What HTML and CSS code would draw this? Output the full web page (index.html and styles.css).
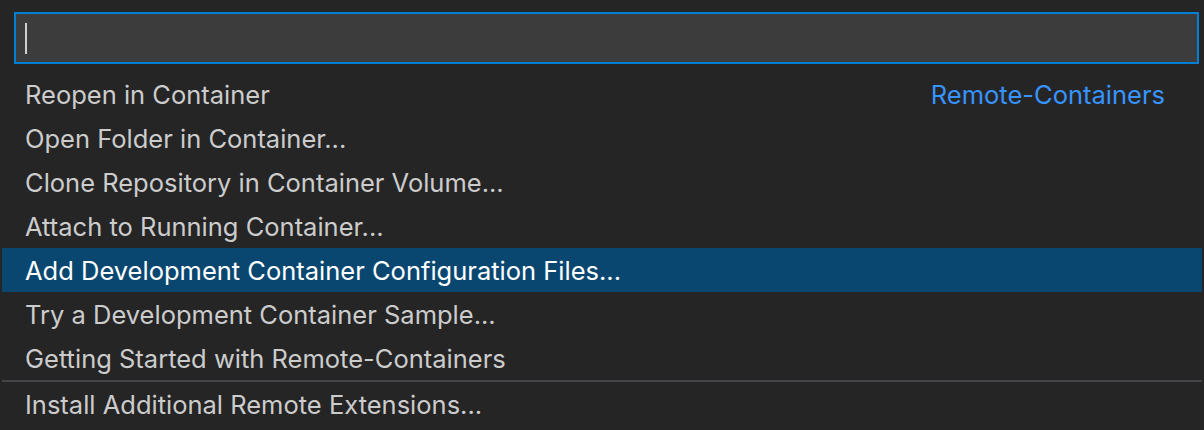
FILE: index.html
```html
<!DOCTYPE html>
<html>
<head>
<meta charset="utf-8">
<link rel="stylesheet" href="styles.css">
</head>
<body>
<div class="quick-pick">
  <div class="input-wrap">
    <div class="input"><span class="cursor"></span></div>
  </div>
  <div class="list">
    <div class="row"><span class="label">Reopen in Container</span><span class="desc">Remote-Containers</span></div>
    <div class="row"><span class="label">Open Folder in Container...</span></div>
    <div class="row"><span class="label">Clone Repository in Container Volume...</span></div>
    <div class="row"><span class="label">Attach to Running Container...</span></div>
    <div class="row selected"><span class="label">Add Development Container Configuration Files...</span></div>
    <div class="row"><span class="label">Try a Development Container Sample...</span></div>
    <div class="row"><span class="label">Getting Started with Remote-Containers</span></div>
    <div class="row separated"><span class="label">Install Additional Remote Extensions...</span></div>
  </div>
</div>
</body>
</html>
```
FILE: styles.css
```css
html, body {
  margin: 0;
  padding: 0;
  background: #252526;
}
.quick-pick {
  width: 1204px;
  height: 430px;
  background: #252526;
  font-family: Inter, "Liberation Sans", Arial, sans-serif;
  overflow: hidden;
}
.input-wrap {
  padding: 12px 14px 0 14px;
}
.input {
  width: 1172px;
  height: 48px;
  border: 2px solid #007fd4;
  background: #3c3c3c;
  display: flex;
  align-items: center;
  padding-left: 9px;
}
.cursor {
  width: 2px;
  height: 31px;
  background: #cfcfcf;
}
.list {
  margin: 8px 2px 0 2px;
}
.row {
  height: 44px;
  display: flex;
  align-items: center;
  justify-content: space-between;
  padding: 1px 37px 0 23px;
  box-sizing: border-box;
  font-size: 25.5px;
  color: #cccccc;
}
.row.selected {
  background: #094771;
  color: #ffffff;
}
.row.separated {
  border-top: 2px solid #454549;
  height: 46px;
}
.desc {
  color: #3794ff;
}
```
